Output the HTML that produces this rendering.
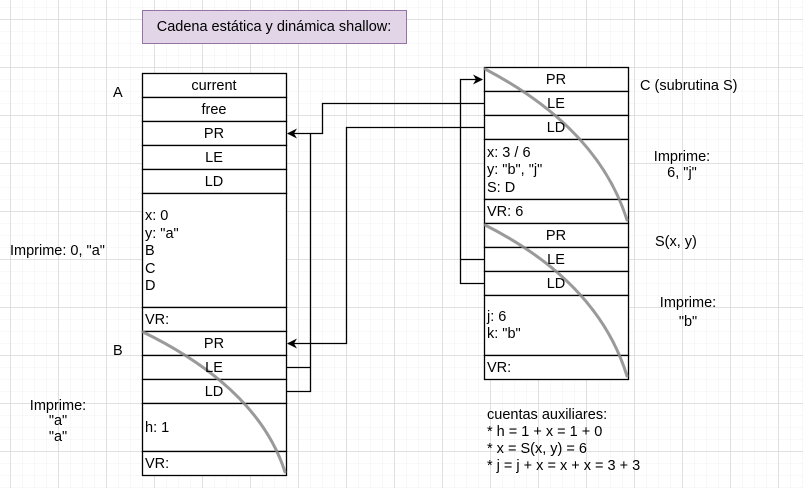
<!DOCTYPE html>
<html><head><style>
body{margin:0;background:#fff;}
svg{display:block;font-family:"Liberation Sans",Arial,sans-serif;font-size:14.5px;}
</style></head><body>
<svg width="803" height="488" xmlns="http://www.w3.org/2000/svg">
<defs>
<pattern id="mi" width="12" height="12" patternUnits="userSpaceOnUse" x="10" y="7"><path d="M0 0V12M0 0H12" stroke="#f2f2f2" stroke-width="1" fill="none"/></pattern>
<pattern id="ma" width="48" height="48" patternUnits="userSpaceOnUse" x="10" y="19"><path d="M0.5 0V48M0 0.5H48" stroke="#e0e0e0" stroke-width="1" fill="none"/></pattern>
<marker id="ar" markerWidth="10" markerHeight="10" refX="9" refY="5" orient="auto" markerUnits="userSpaceOnUse"><path d="M0 0L10 5L0 10L3 5Z" fill="#000"/></marker>
</defs>
<rect width="803" height="488" fill="url(#mi)"/>
<rect width="803" height="488" fill="url(#ma)"/>
<rect x="142.5" y="10.5" width="264" height="33" fill="#e1d5e7" stroke="#9673a6"/>
<text x="274" y="31" text-anchor="middle">Cadena estática y dinámica shallow:</text>
<g fill="#fff" stroke="#000" stroke-width="1.3">
<rect x="142.5" y="73.5" width="144" height="24"/><rect x="142.5" y="97.5" width="144" height="24"/>
<rect x="142.5" y="121.5" width="144" height="24"/><rect x="142.5" y="145.5" width="144" height="24"/>
<rect x="142.5" y="169.5" width="144" height="24"/><rect x="142.5" y="193.5" width="144" height="114"/>
<rect x="142.5" y="307.5" width="144" height="24"/><rect x="142.5" y="331.5" width="144" height="24"/>
<rect x="142.5" y="355.5" width="144" height="24"/><rect x="142.5" y="379.5" width="144" height="24"/>
<rect x="142.5" y="403.5" width="144" height="48"/><rect x="142.5" y="451.5" width="144" height="24"/>
<rect x="484.5" y="67.5" width="144" height="24"/><rect x="484.5" y="91.5" width="144" height="24"/>
<rect x="484.5" y="115.5" width="144" height="24"/><rect x="484.5" y="139.5" width="144" height="60"/>
<rect x="484.5" y="199.5" width="144" height="24"/><rect x="484.5" y="223.5" width="144" height="24"/>
<rect x="484.5" y="247.5" width="144" height="24"/><rect x="484.5" y="271.5" width="144" height="24"/>
<rect x="484.5" y="295.5" width="144" height="60"/><rect x="484.5" y="355.5" width="144" height="24"/>
</g>
<g fill="none" stroke="#000" stroke-width="1.3">
<path d="M484 103.5H322.5V133.5H288" marker-end="url(#ar)"/>
<path d="M484 127.5H346.5V343.5H288" marker-end="url(#ar)"/>
<path d="M286 367.5H310.5M286 391.5H310.5V133.5"/>
<path d="M484 259.5H460.5M484 283.5H460.5V79.5H482" marker-end="url(#ar)"/>
</g>
<g fill="none" stroke="#888" stroke-opacity="0.85" stroke-width="3" stroke-linecap="round">
<path d="M143 332Q258 388 285 472"/>
<path d="M485 69Q598 128 627 220"/>
<path d="M485 225Q598 282 627 376"/>
</g>
<g text-anchor="middle">
<text x="214" y="90">current</text><text x="214" y="114">free</text><text x="214" y="138">PR</text>
<text x="214" y="162">LE</text><text x="214" y="186">LD</text><text x="214" y="348">PR</text>
<text x="214" y="372">LE</text><text x="214" y="396">LD</text>
<text x="556" y="84">PR</text><text x="556" y="108">LE</text><text x="556" y="132">LD</text>
<text x="556" y="240">PR</text><text x="556" y="264">LE</text><text x="556" y="288">LD</text>
<text x="682" y="161">Imprime:</text><text x="682" y="177">6, "j"</text>
<text x="688" y="307">Imprime:</text><text x="688" y="326">"b"</text>
<text x="58" y="410">Imprime:</text><text x="58" y="425">"a"</text><text x="58" y="441">"a"</text>
</g>
<text x="145" y="220">x: 0</text><text x="145" y="238">y: "a"</text><text x="145" y="255">B</text>
<text x="145" y="273">C</text><text x="145" y="290">D</text><text x="145" y="324">VR:</text>
<text x="145" y="432">h: 1</text><text x="145" y="468">VR:</text>
<text x="487" y="157">x: 3 / 6</text><text x="487" y="174">y: "b", "j"</text><text x="487" y="192">S: D</text>
<text x="487" y="216">VR: 6</text><text x="487" y="321">j: 6</text><text x="487" y="338">k: "b"</text>
<text x="487" y="372">VR:</text>
<text x="113" y="97">A</text><text x="113" y="355">B</text>
<text x="10" y="255">Imprime: 0, "a"</text>
<text x="640" y="90">C (subrutina S)</text>
<text x="655" y="246">S(x, y)</text>
<text x="487" y="419">cuentas auxiliares:</text>
<text x="487" y="436">* h = 1 + x = 1 + 0</text>
<text x="487" y="453">* x = S(x, y) = 6</text>
<text x="487" y="470">* j = j + x = x + x = 3 + 3</text>
</svg>
</body></html>
